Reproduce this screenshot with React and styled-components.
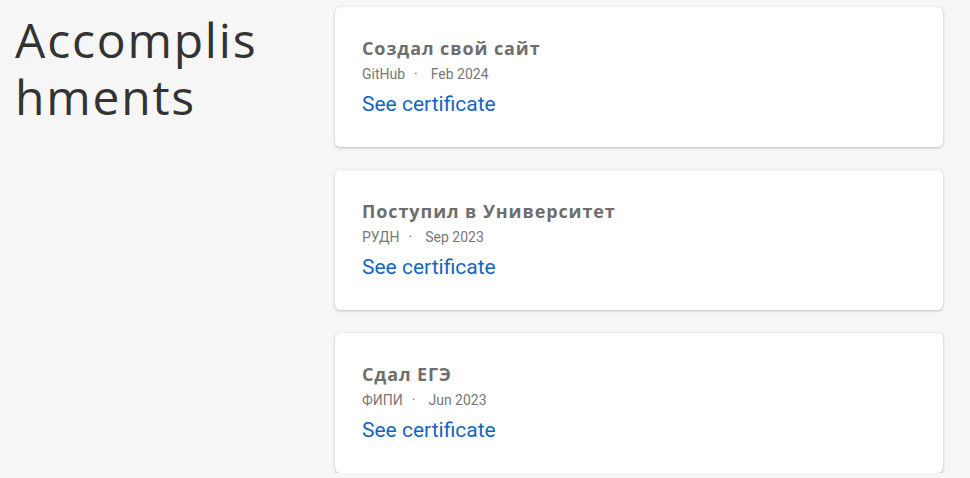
import styled, { createGlobalStyle } from "styled-components";

const GlobalStyle = createGlobalStyle`
  body {
    margin: 0;
    background: #f6f6f6;
    font-family: "Roboto", "Liberation Sans", sans-serif;
  }
`;

const Page = styled.div`
  display: grid;
  grid-template-columns: 335px 608px;
  padding-top: 7px;
`;

const Heading = styled.h2`
  margin: 0;
  padding: 4px 0 0 15px;
  width: 270px;
  font-family: "Open Sans", "Liberation Sans", sans-serif;
  font-weight: 400;
  font-size: 48px;
  line-height: 57px;
  letter-spacing: 1.8px;
  color: #333333;
  word-break: break-all;
`;

const CardList = styled.div`
  display: flex;
  flex-direction: column;
  gap: 23px;
`;

const Card = styled.div`
  height: 140px;
  box-sizing: border-box;
  padding: 29px 27px 0;
  background: #ffffff;
  border-radius: 5px;
  box-shadow: 0 1px 3px rgba(0, 0, 0, 0.22), 0 0 1px rgba(0, 0, 0, 0.12);
`;

const Title = styled.div`
  font-family: "Open Sans", "Liberation Sans", sans-serif;
  font-weight: 700;
  font-size: 18px;
  line-height: 24px;
  letter-spacing: 0.9px;
  color: #6e6e6e;
`;

const Meta = styled.div`
  display: flex;
  margin-top: 5px;
  font-size: 14px;
  line-height: 18px;
  color: #777777;
`;

const Dot = styled.span`
  margin: 0 13px 0 9px;
`;

const Link = styled.a`
  display: inline-block;
  margin-top: 9px;
  font-size: 21px;
  line-height: 24px;
  color: #1565c0;
  text-decoration: none;
`;

const items = [
  { title: "Создал свой сайт", org: "GitHub", date: "Feb 2024" },
  { title: "Поступил в Университет", org: "РУДН", date: "Sep 2023" },
  { title: "Сдал ЕГЭ", org: "ФИПИ", date: "Jun 2023" },
];

export default function App() {
  return (
    <>
      <GlobalStyle />
      <Page>
        <Heading>Accomplishments</Heading>
        <CardList>
          {items.map((item) => (
            <Card key={item.title}>
              <Title>{item.title}</Title>
              <Meta>
                <span>{item.org}</span>
                <Dot>·</Dot>
                <span>{item.date}</span>
              </Meta>
              <Link href="#">See certificate</Link>
            </Card>
          ))}
        </CardList>
      </Page>
    </>
  );
}
